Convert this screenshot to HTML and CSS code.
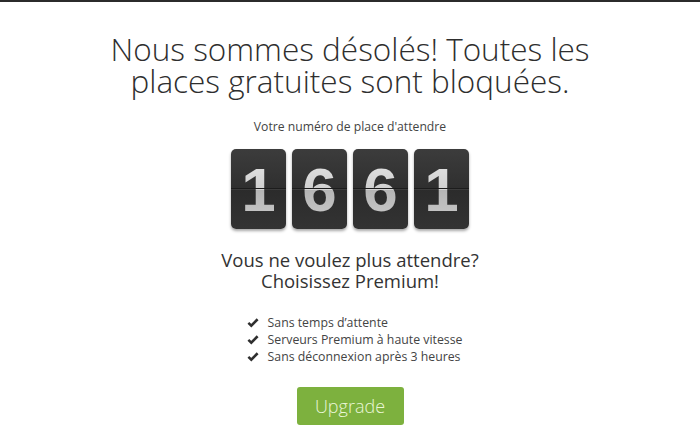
FILE: index.html
```html
<!DOCTYPE html>
<html lang="fr">
<head>
<meta charset="utf-8">
<link rel="stylesheet" href="styles.css">
</head>
<body>
<div class="topbar"></div>
<main class="page">
  <h1 class="title">Nous sommes désolés! Toutes les<br>places gratuites sont bloquées.</h1>
  <p class="label">Votre numéro de place d'attendre</p>
  <div class="counter">
    <div class="card"><span class="digit">1</span></div>
    <div class="card"><span class="digit">6</span></div>
    <div class="card"><span class="digit">6</span></div>
    <div class="card"><span class="digit">1</span></div>
  </div>
  <h2 class="cta">Vous ne voulez plus attendre?<br>Choisissez Premium!</h2>
  <ul class="features">
    <li><svg class="check" viewBox="0 0 14 12" aria-hidden="true"><path d="M1.6 6.4 L5 9.6 L12.4 2.2" /></svg>Sans temps d’attente</li>
    <li><svg class="check" viewBox="0 0 14 12" aria-hidden="true"><path d="M1.6 6.4 L5 9.6 L12.4 2.2" /></svg>Serveurs Premium à haute vitesse</li>
    <li><svg class="check" viewBox="0 0 14 12" aria-hidden="true"><path d="M1.6 6.4 L5 9.6 L12.4 2.2" /></svg>Sans déconnexion après 3 heures</li>
  </ul>
  <a class="btn" href="#">Upgrade</a>
</main>
</body>
</html>
```
FILE: styles.css
```css
html, body {
  margin: 0;
  padding: 0;
  background: #fff;
}
body {
  font-family: "Open Sans", "Liberation Sans", sans-serif;
  color: #333;
}
.topbar {
  height: 2px;
  background: #2b2b2b;
}
.page {
  display: flex;
  flex-direction: column;
  align-items: center;
  text-align: center;
}
.title {
  margin: 31px 0 0;
  font-size: 31.5px;
  font-weight: 300;
  line-height: 32px;
  color: #2e2e2e;
}
.label {
  margin: 22px 0 0;
  font-size: 12.2px;
  line-height: 16px;
  color: #444;
}
.counter {
  display: flex;
  gap: 6px;
  margin-top: 14px;
}
.card {
  position: relative;
  width: 55px;
  height: 80px;
  border-radius: 5px;
  background: linear-gradient(#3c3c3c, #2f2f2f 50%, #2b2b2b 50%, #333 100%);
  box-shadow: 0 2px 3px rgba(0,0,0,0.35);
  display: flex;
  align-items: center;
  justify-content: center;
  overflow: hidden;
}
.card::after {
  content: "";
  position: absolute;
  left: 0;
  right: 0;
  top: 39px;
  height: 1px;
  background: #1c1c1c;
  box-shadow: 0 1px 0 rgba(255,255,255,0.08);
}
.digit {
  font-family: "Liberation Sans", Arial, sans-serif;
  font-weight: 700;
  font-size: 62px;
  line-height: 1;
  background: linear-gradient(#e4e4e4, #cfcfcf 50%, #b5b5b5 50%, #c9c9c9);
  -webkit-background-clip: text;
  background-clip: text;
  color: transparent;
  margin-top: 2px;
}
.cta {
  margin: 20px 0 0;
  font-size: 18.5px;
  font-weight: 400;
  line-height: 21px;
  color: #333;
}
.features {
  list-style: none;
  margin: 23px 0 0;
  padding: 0 0 0 9px;
  text-align: left;
  font-size: 12.3px;
  line-height: 17px;
  color: #444;
}
.features li {
  display: flex;
  align-items: center;
  gap: 9px;
}
.check {
  width: 12px;
  height: 11px;
  fill: none;
  stroke: #2f2f2f;
  stroke-width: 3;
}
.btn {
  margin-top: 22px;
  width: 107px;
  height: 38px;
  display: flex;
  align-items: center;
  justify-content: center;
  background: #7db13e;
  border-radius: 3px;
  color: #eaf6d8;
  font-size: 18px;
  font-weight: 300;
  text-decoration: none;
}
```
